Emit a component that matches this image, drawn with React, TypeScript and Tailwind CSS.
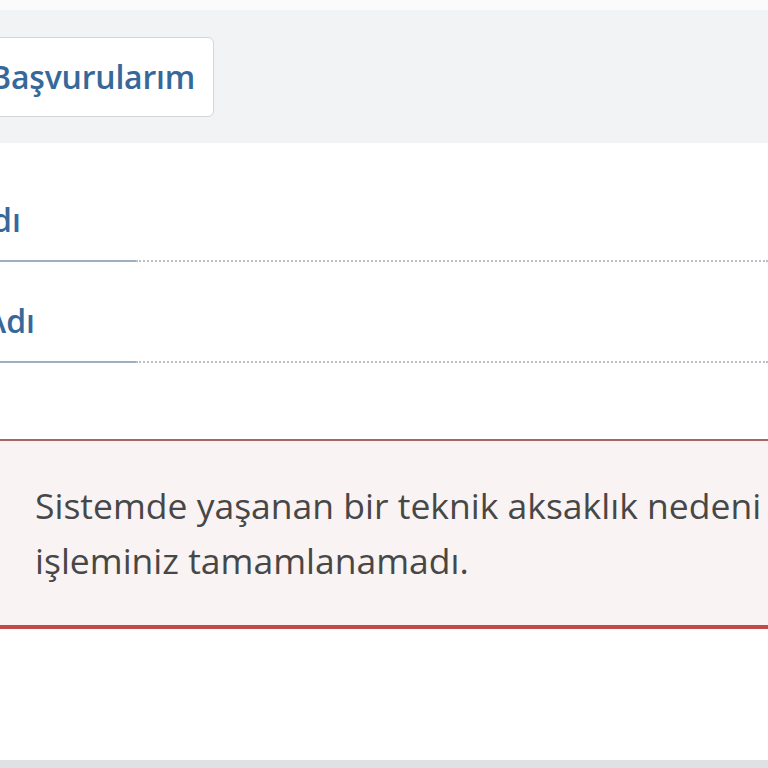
export default function App() {
  return (
    <div className="w-[768px] h-[768px] overflow-hidden bg-white font-['Open_Sans',sans-serif] flex flex-col">
      <div className="h-[10px] bg-[#fbfbfc]" />
      <div className="h-[133px] bg-[#f2f3f5] flex items-start pt-[27px]">
        <button className="-ml-[23px] h-[80px] pl-[12px] pr-[18px] bg-white border border-[#d3d6da] rounded-[6px] text-[32px] font-semibold text-[#36699a] tracking-[-0.2px]">
          Başvurularım
        </button>
      </div>
      <div className="flex flex-col">
        <div className="flex items-end h-[119px]">
          <div className="w-[136px] h-full border-b-2 border-[#9db0c2] flex items-center pt-[36px]">
            <span className="-ml-[8px] text-[32px] font-semibold text-[#36699a]">dı</span>
          </div>
          <div className="flex-1 border-b-2 border-dotted border-[#b9c0c7]" />
        </div>
        <div className="flex items-end h-[101px]">
          <div className="w-[136px] h-full border-b-2 border-[#9db0c2] flex items-center pt-[18px]">
            <span className="-ml-[15px] text-[32px] font-semibold text-[#36699a]">Adı</span>
          </div>
          <div className="flex-1 border-b-2 border-dotted border-[#b9c0c7]" />
        </div>
      </div>
      <div className="mt-[76px] bg-[#f9f3f3] border-t-2 border-[#a66464] border-b-4 border-b-[#c24a48] pl-[35px] pt-[37px] pb-[37px] text-[35.5px] leading-[55px] text-[#474747] whitespace-nowrap">
        Sistemde yaşanan bir teknik aksaklık nedeni
        <br />
        işleminiz tamamlanamadı.
      </div>
      <div className="flex-1" />
      <div className="h-[8px] bg-[#e0e1e3]" />
    </div>
  );
}
